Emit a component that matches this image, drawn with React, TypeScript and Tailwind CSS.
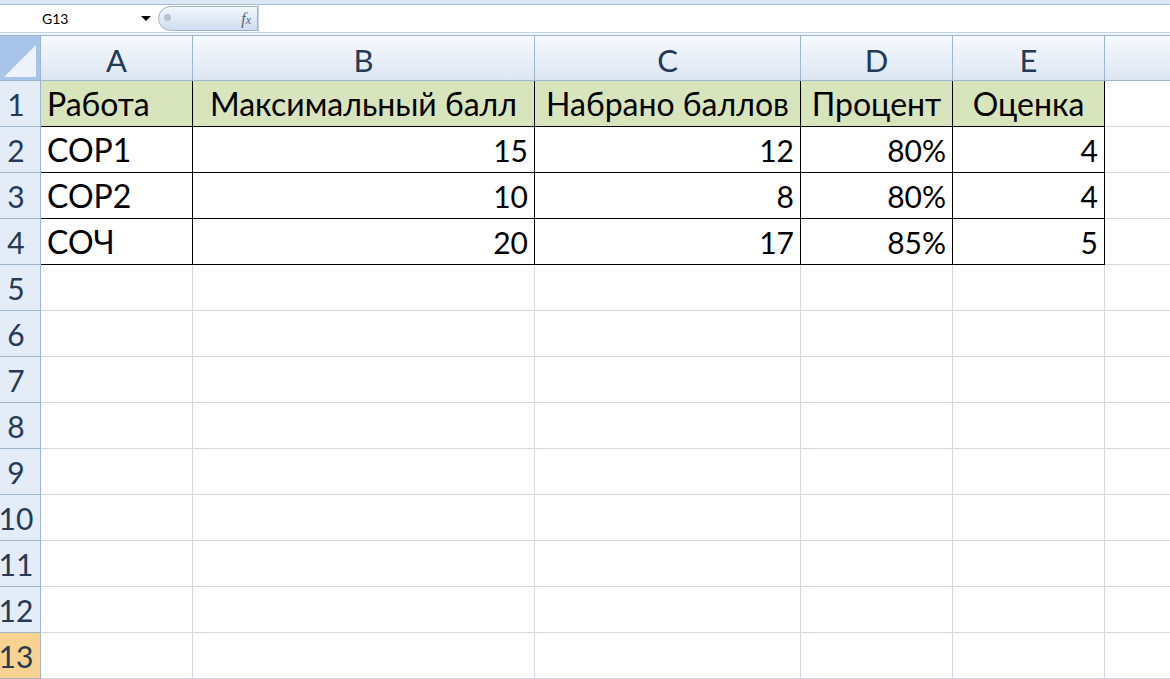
import React from "react";

const cols = [
  { key: "A", w: "w-[152px]" },
  { key: "B", w: "w-[342px]" },
  { key: "C", w: "w-[266px]" },
  { key: "D", w: "w-[152px]" },
  { key: "E", w: "w-[152px]" },
];

const data: (string | number)[][] = [
  ["Работа", "Максимальный балл", "Набрано баллов", "Процент", "Оценка"],
  ["СОР1", 15, 12, "80%", 4],
  ["СОР2", 10, 8, "80%", 4],
  ["СОЧ", 20, 17, "85%", 5],
];

const rowCount = 13;

function FormulaBar() {
  return (
    <div className="flex flex-col">
      <div className="h-[5px] bg-[#dce7f5] border-b border-[#a7bcd5]" />
      <div className="flex h-[28px] items-center bg-white border-b border-[#c5d2e2]">
        <div className="relative flex h-full w-[158px] items-center">
          <span className="pl-[42px] text-[14px] text-black">G13</span>
          <span className="absolute left-[141px] top-[11px] h-0 w-0 border-x-[5px] border-t-[5px] border-x-transparent border-t-black" />
        </div>
        <div className="relative flex h-[25px] w-[100px] items-center justify-end rounded-l-full border border-[#9fb4cc] bg-gradient-to-b from-[#f3f7fc] to-[#cfdcee] pr-[6px]">
          <span className="absolute left-[5px] top-[7px] h-[7px] w-[7px] rounded-full bg-[#b9c2cc]" />
          <span className="font-['Liberation_Serif',serif] text-[16px] italic text-[#5b6677]">
            f<span className="text-[12px]">x</span>
          </span>
        </div>
        <div className="h-full flex-1 border-l border-[#c5d2e2]" />
      </div>
      <div className="h-[3px] bg-[#eef3f9] border-b border-[#9eb6ce]" />
    </div>
  );
}

function HeaderRow() {
  return (
    <div className="flex h-[45px]">
      <div className="relative w-[41px] shrink-0 border-r border-b border-[#9eb6ce] bg-[#a9c4e9]">
        <div className="absolute bottom-[3px] right-[4px] h-0 w-0 border-l-[32px] border-b-[32px] border-l-transparent border-b-[#eef3fa]" />
      </div>
      {cols.map((c) => (
        <div
          key={c.key}
          className={`${c.w} shrink-0 flex items-center justify-center pt-[4px] border-r border-b border-[#9eb6ce] bg-gradient-to-b from-[#f6f9fd] to-[#dce6f2] text-[31px] text-[#243a55]`}
        >
          {c.key}
        </div>
      ))}
      <div className="flex-1 border-b border-[#9eb6ce] bg-gradient-to-b from-[#f6f9fd] to-[#dce6f2]" />
    </div>
  );
}

function Row({ n }: { n: number }) {
  const values = data[n - 1];
  const inTable = !!values;
  const selected = n === 13;
  return (
    <div className="flex h-[46px]">
      <div
        className={`w-[41px] shrink-0 flex items-center overflow-hidden border-r border-b border-[#9eb6ce] text-[30px] text-[#243a55] ${
          selected ? "bg-[#f8d290]" : "bg-[#e4ecf7]"
        }`}
      >
        <div className="flex w-[32px] shrink-0 justify-center pt-[1px] leading-none">
          <span className="whitespace-nowrap">{n}</span>
        </div>
      </div>
      {cols.map((c, i) => {
        const v = values?.[i];
        const isNum = typeof v === "number" || (typeof v === "string" && v.endsWith("%"));
        const align = isNum ? "justify-end" : n === 1 && i > 0 ? "justify-center" : "justify-start";
        return (
          <div
            key={c.key}
            className={`${c.w} shrink-0 flex items-center px-[6px] pt-[1px] text-black whitespace-nowrap ${
              isNum ? "text-[30px]" : "text-[32px]"
            } ${
              inTable ? "border-r border-b border-black" : "border-r border-b border-[#d4d9e1]"
            } ${n === 1 ? "bg-[#d8e4bc]" : "bg-white"} ${align}`}
          >
            {v}
          </div>
        );
      })}
      <div className="flex-1 border-b border-[#d4d9e1] bg-white" />
    </div>
  );
}

export default function App() {
  return (
    <div className="h-[679px] w-[1170px] overflow-hidden bg-white font-['Lato','Open_Sans',sans-serif]">
      <FormulaBar />
      <HeaderRow />
      {Array.from({ length: rowCount }, (_, i) => (
        <Row key={i} n={i + 1} />
      ))}
    </div>
  );
}
